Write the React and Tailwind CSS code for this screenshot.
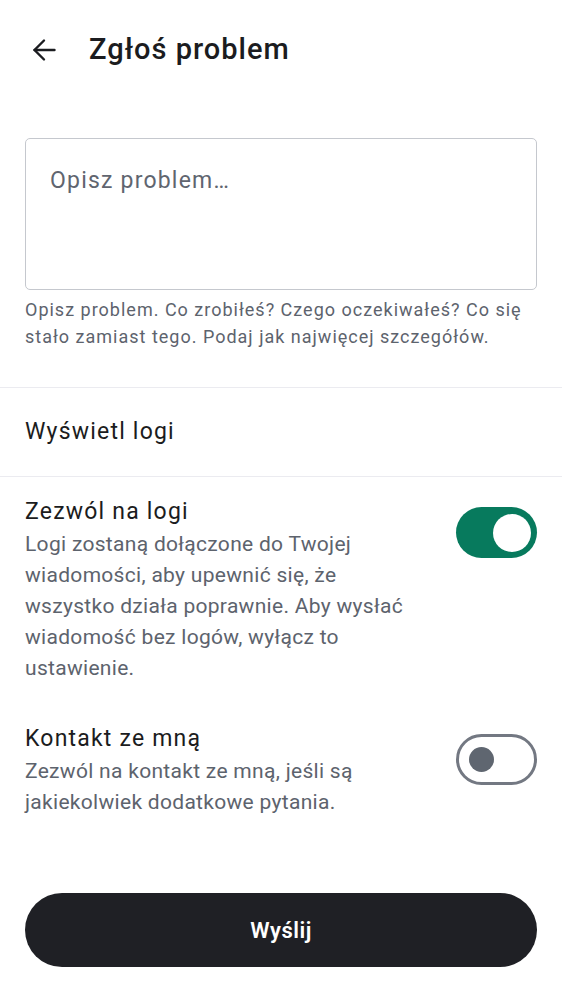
import { useState } from "react";

function Toggle({ checked, onChange }) {
  return (
    <button
      onClick={onChange}
      className={
        checked
          ? "shrink-0 w-[81px] h-[51px] rounded-full bg-[#077a5d] flex items-center justify-end pr-[6px]"
          : "shrink-0 w-[81px] h-[51px] rounded-full border-[3px] border-[#737882] bg-white flex items-center justify-start pl-[10px]"
      }
    >
      <span
        className={
          checked
            ? "block w-[38px] h-[38px] rounded-full bg-white"
            : "block w-[25px] h-[25px] rounded-full bg-[#5f6670]"
        }
      />
    </button>
  );
}

// lines are kept as in the design, so the wrapping is the same
function SettingRow({ title, lines, checked, onChange }) {
  return (
    <div className="flex items-start gap-[26px]">
      <div className="flex-1">
        <p className="text-[23px] leading-[30px] tracking-[1.2px] text-[#1b1c20]">{title}</p>
        <p className="mt-[2px] text-[21px] leading-[31px] tracking-[0.3px] text-[#5d636d]">
          {lines.map((line, i) => (
            <span key={i}>
              {line}
              {i < lines.length - 1 && <br />}
            </span>
          ))}
        </p>
      </div>
      <div className="pt-[10px]">
        <Toggle checked={checked} onChange={onChange} />
      </div>
    </div>
  );
}

export default function App() {
  const [text, setText] = useState("");
  const [logs, setLogs] = useState(true);
  const [contact, setContact] = useState(false);

  return (
    <div className="min-h-screen bg-white font-['Roboto',sans-serif] text-[#1b1c20]">
      {/* top bar */}
      <div className="flex items-center h-[100px] px-[32px] gap-[33px]">
        <svg width="24" height="24" viewBox="0 0 24 24" fill="none" stroke="#1b1c20" strokeWidth="2.4" strokeLinecap="round" strokeLinejoin="round">
          <path d="M22.5 12H2.5" />
          <path d="M12 2.5L2.5 12l9.5 9.5" />
        </svg>
        <h1 className="text-[29px] font-medium leading-none tracking-[1px] pb-[2px]">Zgłoś problem</h1>
      </div>

      <div className="px-[25px] pt-[38px]">
        <textarea
          value={text}
          onChange={(e) => setText(e.target.value)}
          placeholder="Opisz problem…"
          className="block w-full h-[152px] resize-none rounded-[5px] border border-[#c5c8ce] px-[24px] pt-[27px] text-[23px] leading-[30px] tracking-[1.2px] outline-none placeholder:text-[#60656f]"
        />
        <p className="mt-[6px] text-[18px] leading-[27px] tracking-[1px] text-[#5d636d]">
          Opisz problem. Co zrobiłeś? Czego oczekiwałeś? Co się stało zamiast tego. Podaj jak najwięcej szczegółów.
        </p>
      </div>

      <div className="mt-[37px] border-t border-[#ebebf0]" />
      <button className="w-full h-[88px] px-[25px] flex items-center text-left text-[23px] tracking-[1.2px] text-[#1b1c20]">
        Wyświetl logi
      </button>
      <div className="border-t border-[#ebebf0]" />

      <div className="px-[25px] pt-[20px] flex flex-col gap-[40px]">
        <SettingRow
          title="Zezwól na logi"
          lines={[
            "Logi zostaną dołączone do Twojej",
            "wiadomości, aby upewnić się, że",
            "wszystko działa poprawnie. Aby wysłać",
            "wiadomość bez logów, wyłącz to",
            "ustawienie.",
          ]}
          checked={logs}
          onChange={() => setLogs(!logs)}
        />
        <SettingRow
          title="Kontakt ze mną"
          lines={["Zezwól na kontakt ze mną, jeśli są", "jakiekolwiek dodatkowe pytania."]}
          checked={contact}
          onChange={() => setContact(!contact)}
        />
      </div>

      <div className="px-[25px] pt-[75px] pb-[33px]">
        <button className="w-full h-[74px] rounded-full bg-[#1f2025] text-white text-[22px] font-semibold tracking-[0.5px]">
          Wyślij
        </button>
      </div>
    </div>
  );
}
